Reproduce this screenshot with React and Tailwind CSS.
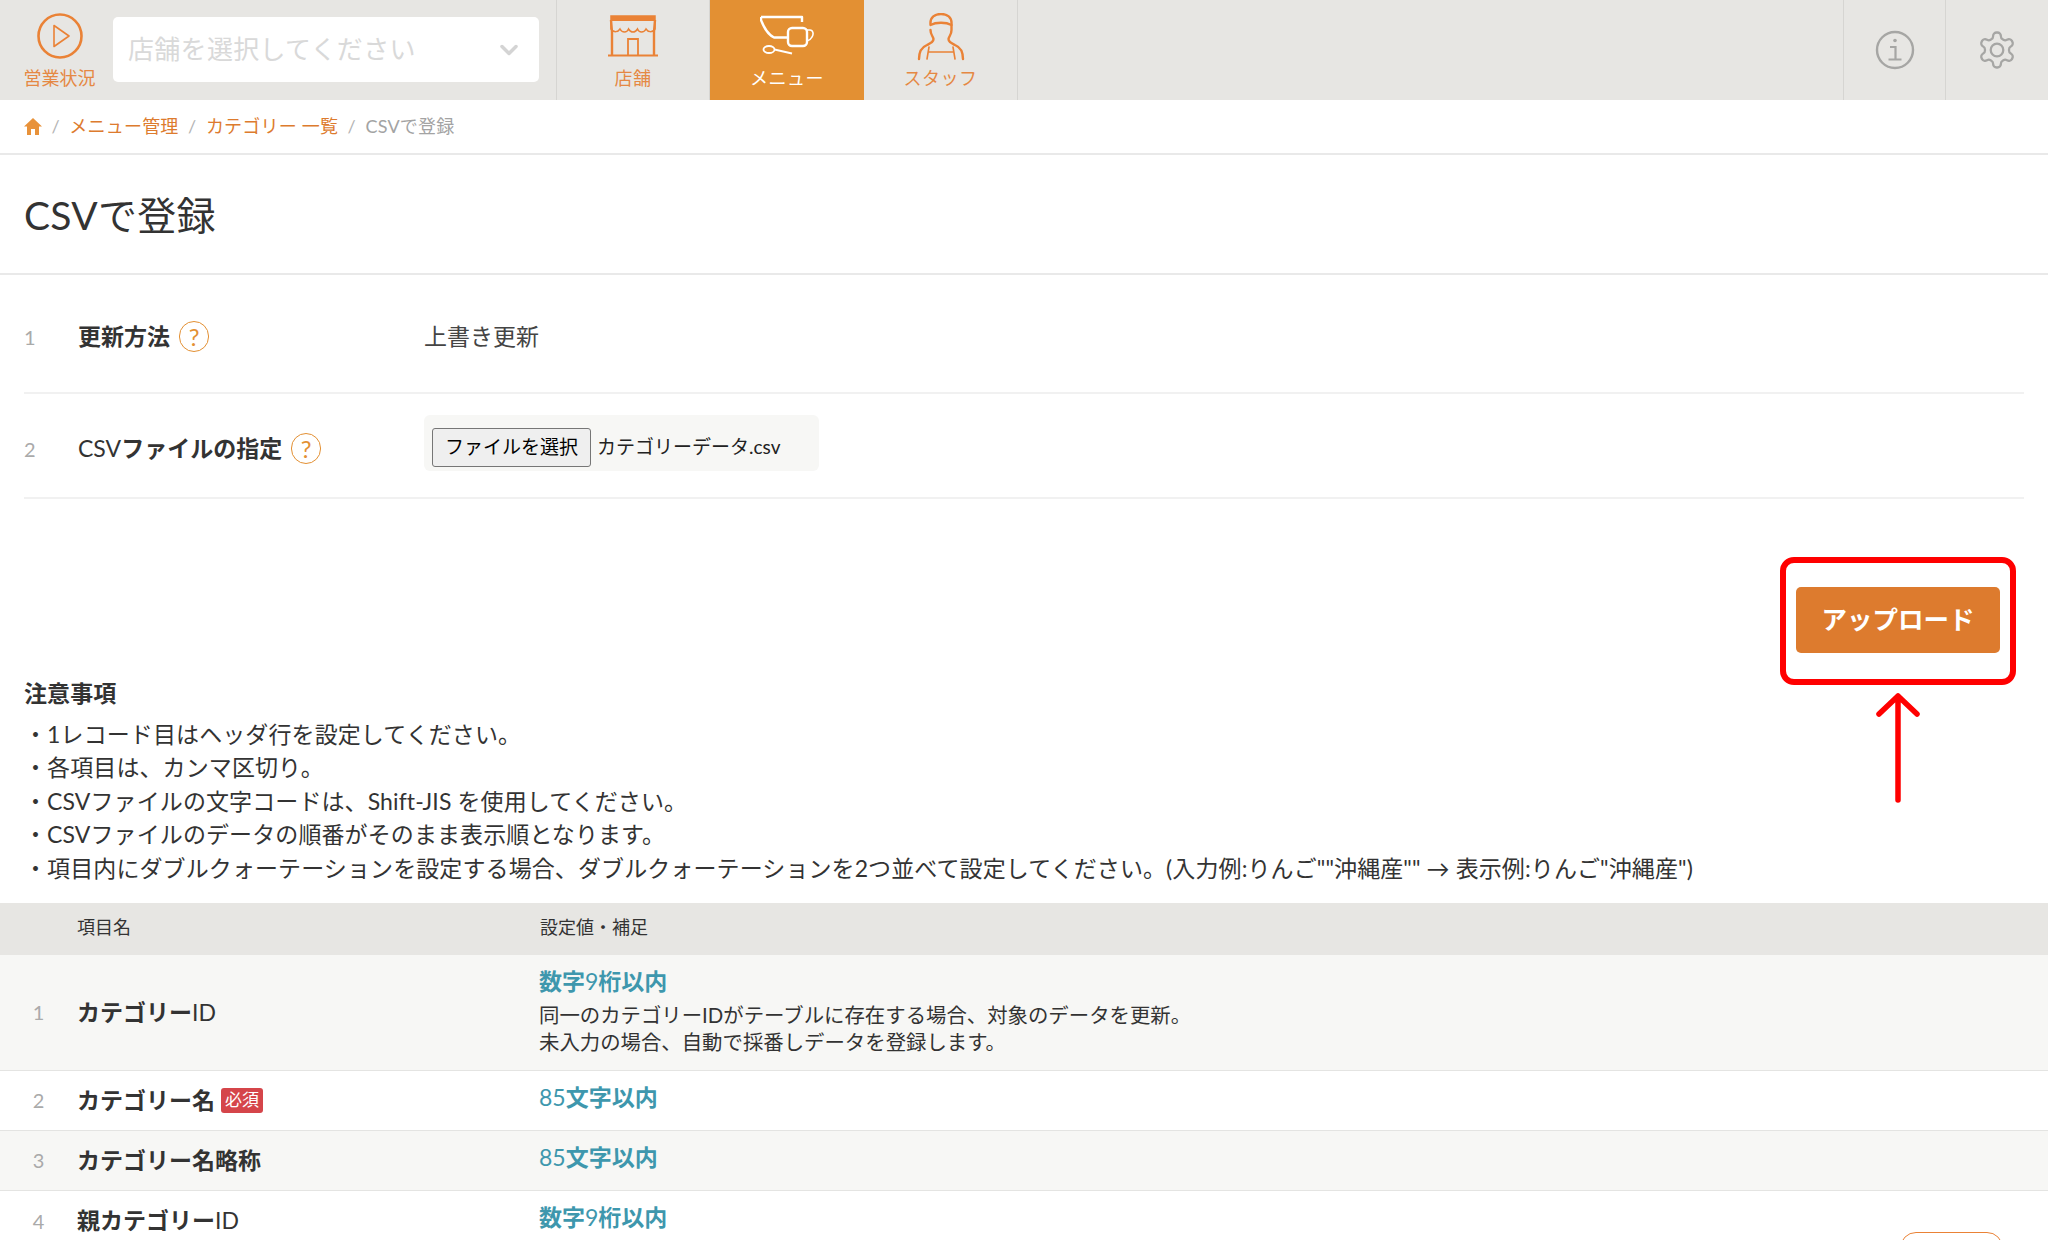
import { ChevronDown } from "lucide-react";

function PlayIcon() {
  return (
    <svg width="46" height="46" viewBox="0 0 46 46" fill="none" stroke="#ea8236">
      <circle cx="23" cy="23" r="21.5" strokeWidth="2.6" />
      <path d="M17 12.5 L32 23 L17 33.5 Z" strokeWidth="1.6" strokeLinejoin="round" />
    </svg>
  );
}

function StoreIcon() {
  return (
    <svg width="50" height="43" viewBox="0 0 50 43" fill="none" stroke="#ea8236" strokeWidth="2">
      <path d="M3 2 H47 V15 C44 19 40 18 38 15 C36 19 31 19 29.500 15 C27 19 23 19 20.500 15 C19 19 14 19 12 15 C10 18 6 19 3 15 Z" strokeWidth="1.5" />
      <path d="M3 2 H47 V7 H3 Z" fill="#ea8236" stroke="none" />
      <path d="M3 6 L4 18 V41 M47 6 L46 18 V41" strokeWidth="2.4" />
      <path d="M0 41.500 H50" strokeWidth="2" />
      <path d="M20 41 V25 H30 V41" strokeWidth="1.800" />
    </svg>
  );
}

function MenuIcon() {
  return (
    <svg width="54" height="40" viewBox="0 0 54 40" fill="none" stroke="#fff" strokeWidth="2.400" strokeLinejoin="round">
      <path d="M1 2 H42 V7 M1 2 V5 C4 13 9 20 14 22.500 H27" />
      <rect x="28" y="13" width="19" height="18" rx="4" fill="#e39033" />
      <path d="M47 15 H50 C53 15 54 19 52 22 C51 24 49 25.500 47 26" strokeWidth="1.600" />
      <ellipse cx="9" cy="34.500" rx="5.500" ry="3.500" strokeWidth="1.800" />
      <path d="M14.500 34.500 L32 38.500" strokeWidth="1.800" />
    </svg>
  );
}

function StaffIcon() {
  return (
    <svg className="mt-[3px]" width="48" height="48" viewBox="0 0 48 48" fill="none" stroke="#ea8236" strokeWidth="2.400" strokeLinecap="round">
      <path d="M13.500 11 C13 4 18 1 24 1 C30 1 35 4 34.500 11 V17 C34.500 22 32 23 31.500 26 C31.500 29 34 30 38 32 C43 34 46 38 46 46" />
      <path d="M13.500 17 C13.500 22 16 23 16.500 26 C16.500 29 14 30 10 32 C5 34 2 38 2 46" />
      <path d="M13.500 12 C19 9 29 9 34.500 12" />
      <path d="M12 34 L10 46 M36 34 L38 46 M12 39 H36" strokeWidth="1.600" />
    </svg>
  );
}

function InfoIcon() {
  return (
    <svg width="40" height="40" viewBox="0 0 40 40" fill="none" stroke="#a6a6a4">
      <circle cx="20" cy="20" r="18" strokeWidth="2.400" />
      <circle cx="20" cy="10.500" r="1.800" fill="#a6a6a4" stroke="none" />
      <path d="M15 17 H20.500 V29 M13.500 29.500 H26.500" strokeWidth="2.200" />
    </svg>
  );
}

function GearIcon() {
  return (
    <svg width="42" height="42" viewBox="0 0 24 24" fill="none" stroke="#a6a6a4" strokeWidth="1.300" strokeLinecap="round" strokeLinejoin="round">
      <path d="M12.220 2h-.440a2 2 0 0 0-2 2v.180a2 2 0 0 1-1 1.730l-.430.250a2 2 0 0 1-2 0l-.150-.080a2 2 0 0 0-2.730.730l-.220.380a2 2 0 0 0 .730 2.730l.150.100a2 2 0 0 1 1 1.720v.510a2 2 0 0 1-1 1.740l-.150.090a2 2 0 0 0-.730 2.730l.220.380a2 2 0 0 0 2.730.730l.150-.080a2 2 0 0 1 2 0l.430.250a2 2 0 0 1 1 1.730V20a2 2 0 0 0 2 2h.440a2 2 0 0 0 2-2v-.180a2 2 0 0 1 1-1.730l.430-.250a2 2 0 0 1 2 0l.150.080a2 2 0 0 0 2.730-.730l.220-.390a2 2 0 0 0-.730-2.730l-.150-.080a2 2 0 0 1-1-1.740v-.500a2 2 0 0 1 1-1.740l.150-.090a2 2 0 0 0 .730-2.730l-.220-.380a2 2 0 0 0-2.730-.730l-.150.080a2 2 0 0 1-2 0l-.430-.250a2 2 0 0 1-1-1.730V4a2 2 0 0 0-2-2z" />
      <circle cx="12" cy="12" r="3.600" />
    </svg>
  );
}

function HomeIcon() {
  return (
    <svg width="18" height="17" viewBox="0 0 18 17" fill="#e8923a">
      <path d="M9 0 L18 8.500 H15 V17 H11 V11 H7 V17 H3 V8.500 H0 Z" />
    </svg>
  );
}

function Help() {
  return (
    <span className="ml-[9px] flex h-[31px] w-[30px] items-center justify-center rounded-full border border-[#e39033] text-[24px] font-normal text-[#e39033]">
      ?
    </span>
  );
}

function Tab({ icon, label, active, width }) {
  return (
    <div
      className={
        active
          ? "flex w-[154px] flex-col items-center bg-[#e39033] text-white"
          : "flex flex-col items-center border-r border-[#d6d5d2] text-[#e58843] " + width
      }
    >
      <div className="flex h-[62px] items-center pt-2">{icon}</div>
      <div className="mt-[4px] text-[18px] leading-[24px] tracking-[0.5px]">{label}</div>
    </div>
  );
}

function Crumb({ children }) {
  return <span className="text-[#dd7b2e]">{children}</span>;
}

function Slash() {
  return <span className="mx-[9.500px] text-[#b5b5b5]">/</span>;
}

// latin in the headings comes out in regular weight, only the kana is bold
function Thin({ children }) {
  return <span className="font-normal">{children}</span>;
}

function Row({ num, name, badge, limit, alt, children, pill }) {
  return (
    <div
      className={
        "grid grid-cols-[77px_462px_1fr_auto] border-b border-[#e4e4e2] " +
        (alt ? "bg-[#f7f7f5]" : "bg-white")
      }
    >
      <div className={"flex items-center justify-center text-[20px] text-[#aaaaaa] " + (pill ? "h-[60px]" : "")}>
        {num}
      </div>
      <div className={"flex items-center text-[23px] font-bold text-[#333] " + (pill ? "h-[60px]" : "")}>
        {name}
        {badge && (
          <span className="ml-[6px] flex h-[25px] items-center rounded-[3px] bg-[#d5454a] px-[4px] text-[17px] font-normal text-white">
            必須
          </span>
        )}
      </div>
      <div className="pt-[10px] pb-[16px]">
        <div className="text-[23px] leading-[33px] font-bold text-[#3e97ad]">{limit}</div>
        {children}
      </div>
      {pill && <div className="mt-[41px] mr-[45px] h-[40px] w-[103px] rounded-[16px] border border-[#ea8236]" />}
    </div>
  );
}

export default function App() {
  const notes = [
    "・1レコード目はヘッダ行を設定してください。",
    "・各項目は、カンマ区切り。",
    "・CSVファイルの文字コードは、Shift-JIS を使用してください。",
    "・CSVファイルのデータの順番がそのまま表示順となります。",
    "・項目内にダブルクォーテーションを設定する場合、ダブルクォーテーションを2つ並べて設定してください。(入力例:りんご\"\"沖縄産\"\" → 表示例:りんご\"沖縄産\")",
  ];

  return (
    <div className="h-screen overflow-hidden bg-white font-[Lato,'Noto_Sans_CJK_JP',sans-serif] text-[#333]">
      <header className="flex h-[100px] bg-[#e7e6e3]">
        <div className="flex w-[557px] border-r border-[#d6d5d2]">
          <div className="flex w-[113px] shrink-0 flex-col items-center pt-[13px] pl-[6px] text-[#e58843]">
            <PlayIcon />
            <div className="mt-[7px] text-[18px] leading-[24px]">営業状況</div>
          </div>
          <div className="mt-[17px] flex h-[65px] w-[426px] items-center justify-between rounded-[5px] bg-white pr-[16px] pl-[15px] text-[26px] tracking-[0.3px] text-[#d9d9d9]">
            店舗を選択してください
            <ChevronDown size={28} strokeWidth={3} color="#d4d4d4" />
          </div>
        </div>
        <Tab icon={<StoreIcon />} label="店舗" width="w-[153px]" />
        <Tab icon={<MenuIcon />} label="メニュー" active />
        <Tab icon={<StaffIcon />} label="スタッフ" width="w-[154px]" />
        <div className="flex-1" />
        <div className="flex w-[102px] items-center justify-center border-l border-[#d6d5d2]">
          <InfoIcon />
        </div>
        <div className="flex w-[103px] items-center justify-center border-l border-[#d6d5d2]">
          <GearIcon />
        </div>
      </header>

      <nav className="flex h-[55px] items-center border-b-2 border-[#e9e9e9] pl-[24px] text-[18px] tracking-[0.2px]">
        <HomeIcon />
        <Slash />
        <Crumb>メニュー管理</Crumb>
        <Slash />
        <Crumb>カテゴリー 一覧</Crumb>
        <Slash />
        <span className="text-[#a3a3a3]">CSVで登録</span>
      </nav>

      <h1 className="flex h-[120px] items-center border-b-2 border-[#e9e9e9] pt-[3px] pl-[24px] text-[39px] font-normal tracking-[0.3px] text-[#333]">
        CSVで登録
      </h1>

      <div className="mx-[24px]">
        <div className="flex h-[119px] items-center border-b-2 border-[#f1f1f1]">
          <span className="mt-[6px] w-[54px] text-[20px] text-[#aaaaaa]">1</span>
          <span className="mt-[6px] flex w-[346px] items-center text-[23px] font-bold">
            更新方法
            <Help />
          </span>
          <span className="mt-[6px] text-[23px] text-[#444]">上書き更新</span>
        </div>
        <div className="flex h-[105px] items-center border-b-2 border-[#f1f1f1]">
          <span className="mt-[6px] w-[54px] text-[20px] text-[#aaaaaa]">2</span>
          <span className="mt-[6px] flex w-[346px] items-center text-[23px] font-bold">
            <Thin>CSV</Thin>ファイルの指定
            <Help />
          </span>
          <div className="mb-[6px] flex h-[56px] w-[395px] items-center rounded-[6px] bg-[#f7f7f5] pt-[10px] pl-[8px] text-[19px] text-[#222]">
            <button className="h-[39px] w-[159px] rounded-[3px] border border-[#767676] bg-[#efefef] text-[19px] text-black">
              ファイルを選択
            </button>
            <span className="ml-[6px]">カテゴリーデータ.csv</span>
          </div>
        </div>
      </div>

      <div className="mt-[88px] flex justify-end pr-[48px]">
        <div className="relative">
          <button className="flex h-[66px] w-[204px] items-center justify-center rounded-[5px] bg-[#dd7b2e] pb-[2px] text-[25.500px] font-bold text-white">
            アップロード
          </button>
          <div className="absolute -inset-x-[16px] -top-[30px] -bottom-[32px] rounded-[14px] border-[6px] border-[#ff0000]" />
          <svg
            className="absolute top-[106px] left-[79px]"
            width="46"
            height="110"
            viewBox="0 0 46 110"
            fill="none"
            stroke="#ff0000"
            strokeWidth="5.500"
            strokeLinecap="round"
            strokeLinejoin="round"
          >
            <path d="M23 3 V107 M4 21 L23 3 L42 21" />
          </svg>
        </div>
      </div>

      <section className="mt-[24px] px-[24px] pb-[17px] text-[23px] leading-[33.600px] tracking-[0.1px]">
        <h2 className="mb-[7px] font-bold">注意事項</h2>
        {notes.map((n) => (
          <p key={n} className="whitespace-nowrap">
            {n}
          </p>
        ))}
      </section>

      <div className="grid h-[52px] grid-cols-[77px_1fr] items-center bg-[#e7e6e3] pb-[2px] text-[18px]">
        <span className="col-start-2 grid grid-cols-[463px_1fr]">
          <span>項目名</span>
          <span>設定値・補足</span>
        </span>
      </div>
      <Row num="1" name={<>カテゴリー<Thin>ID</Thin></>} limit={<>数字<Thin>9</Thin>桁以内</>} alt>
        <p className="mt-[4px] -mb-[2px] text-[20.400px] leading-[27px] text-[#333]">
          同一のカテゴリーIDがテーブルに存在する場合、対象のデータを更新。
          <br />
          未入力の場合、自動で採番しデータを登録します。
        </p>
      </Row>
      <Row num="2" name="カテゴリー名" limit={<><Thin>85</Thin>文字以内</>} badge />
      <Row num="3" name="カテゴリー名略称" limit={<><Thin>85</Thin>文字以内</>} alt />
      <Row num="4" name={<>親カテゴリー<Thin>ID</Thin></>} limit={<>数字<Thin>9</Thin>桁以内</>} pill />
    </div>
  );
}
